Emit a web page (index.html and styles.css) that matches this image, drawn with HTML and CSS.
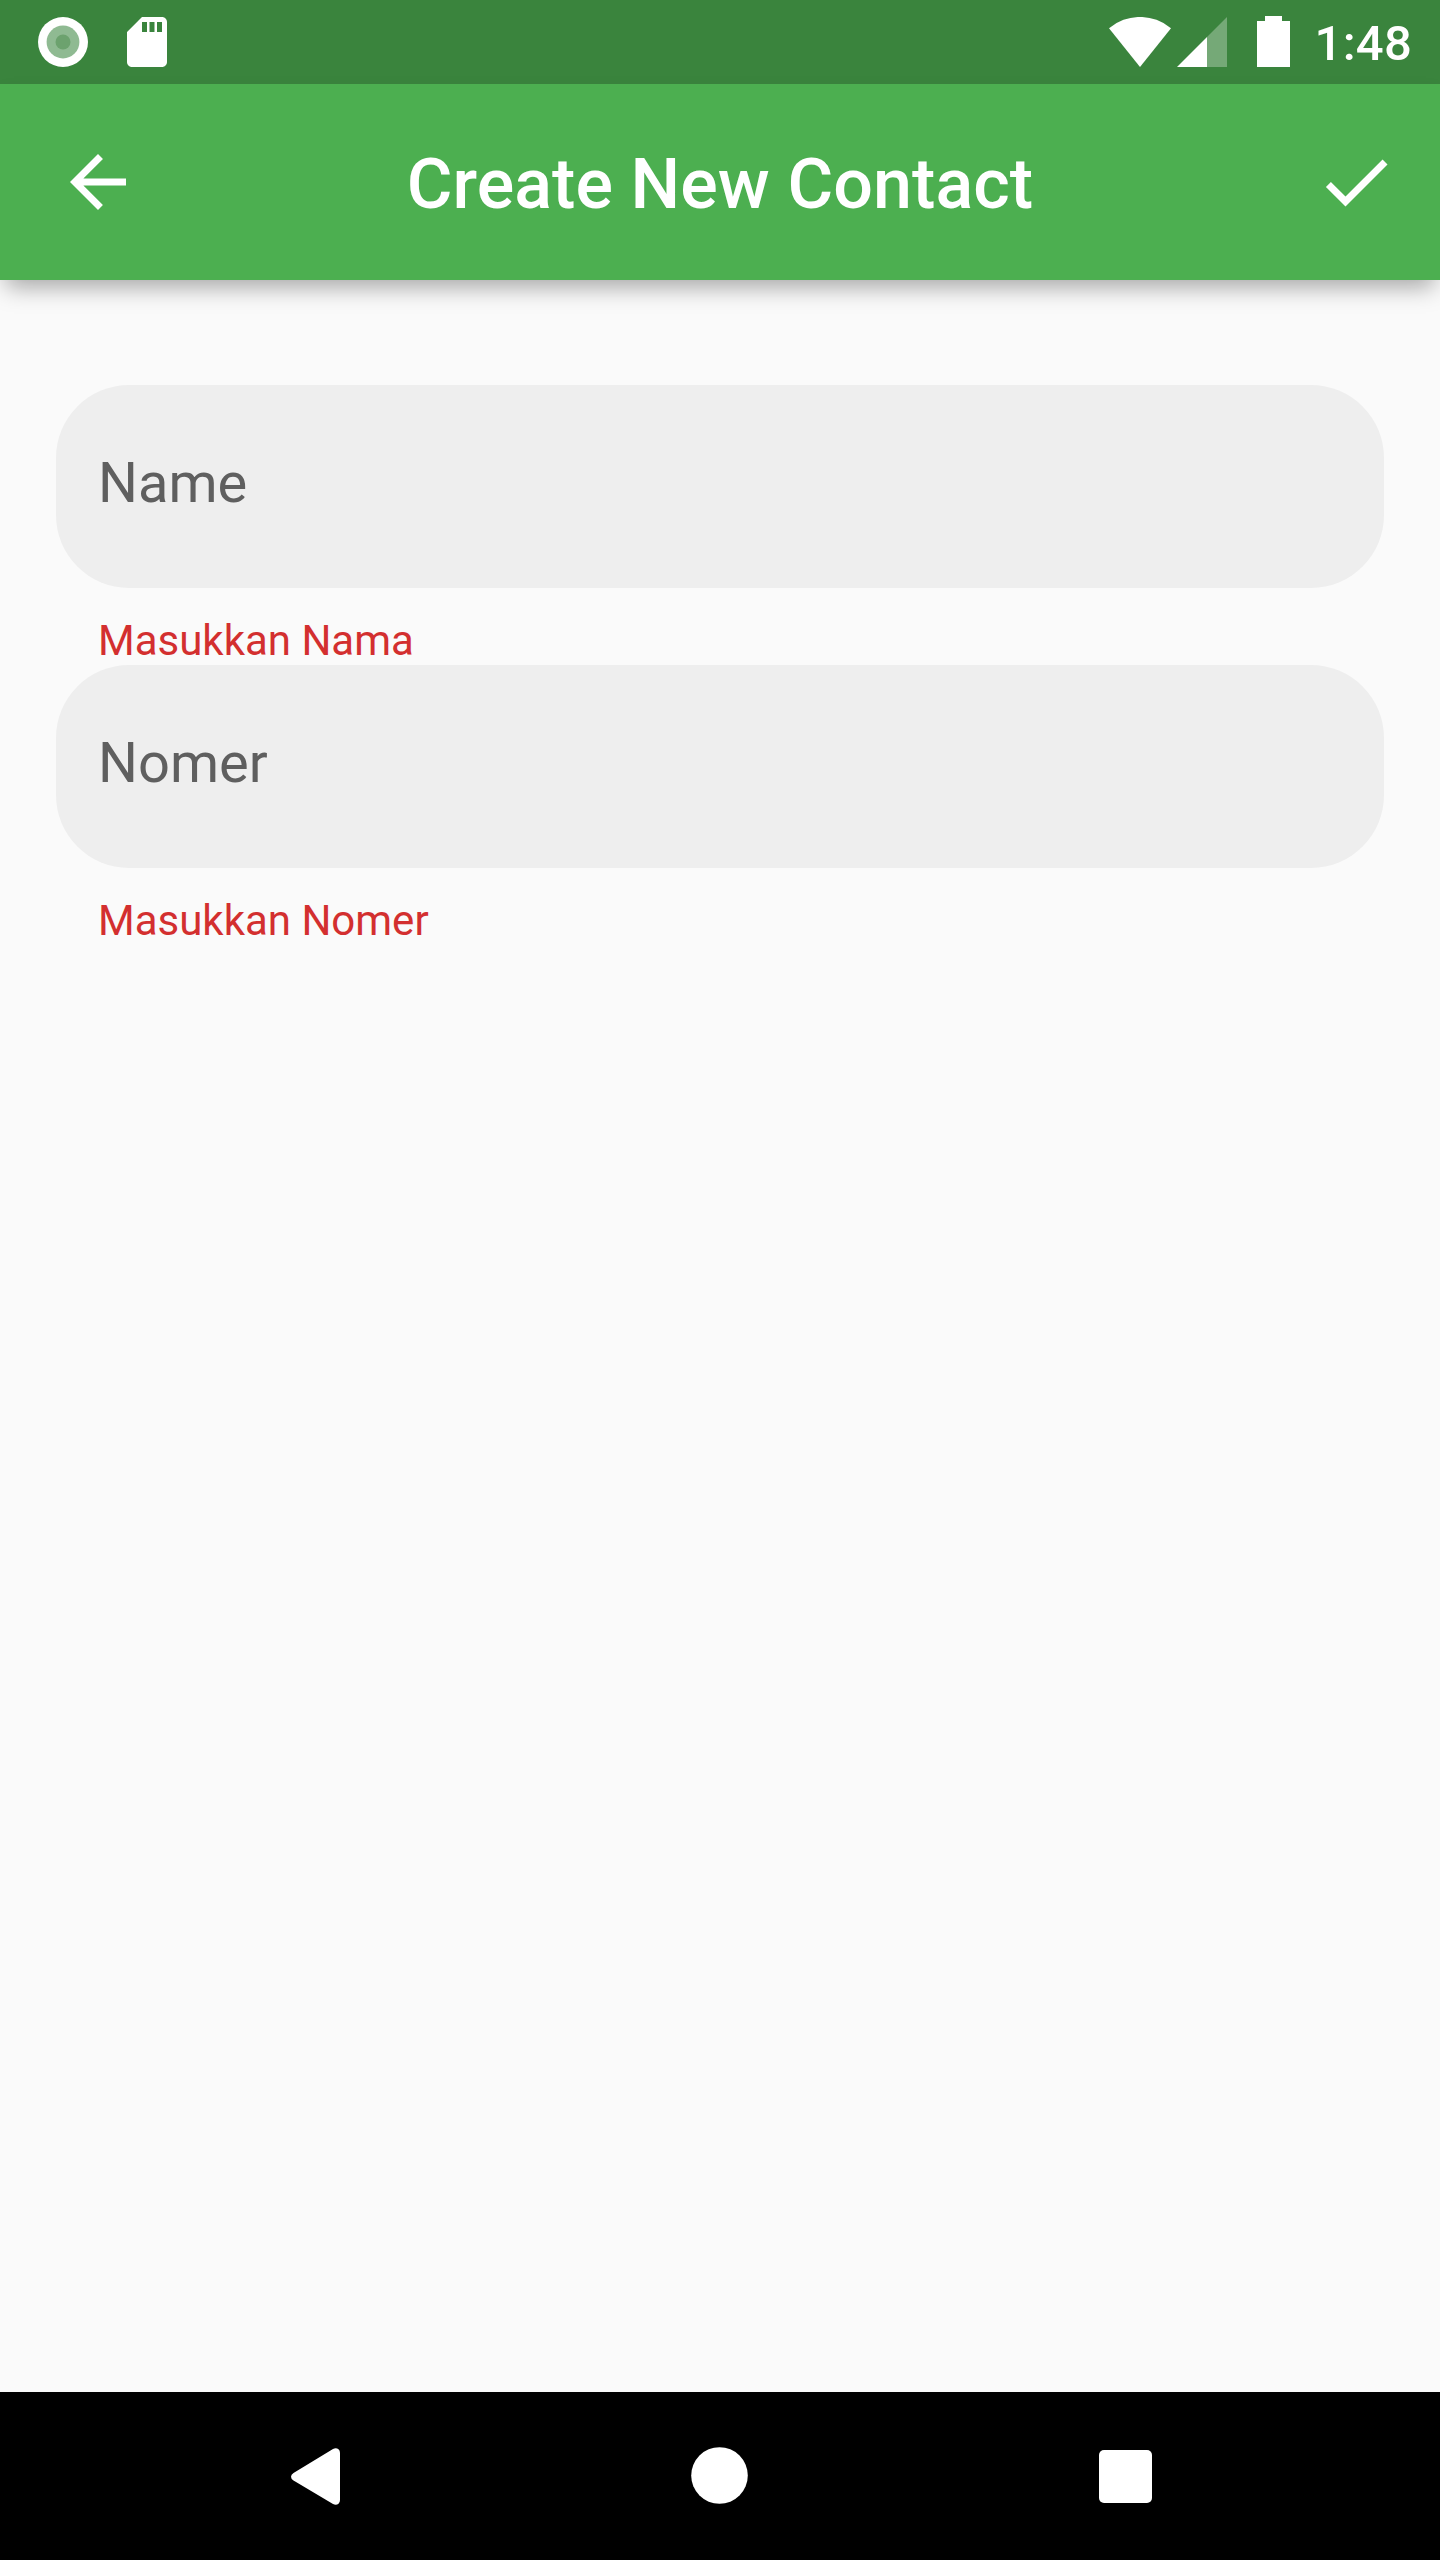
FILE: index.html
```html
<!DOCTYPE html>
<html lang="id">
<head>
<meta charset="utf-8">
<title>Create New Contact</title>
<link rel="stylesheet" href="styles.css">
</head>
<body>
<div class="screen">
  <div class="status-bar">
    <div class="status-left">
      <svg width="50" height="50" viewBox="0 0 50 50"><circle cx="25" cy="25" r="25" fill="#fff"/><circle cx="25" cy="25" r="16.4" fill="#8fba92"/><circle cx="25" cy="25" r="7.5" fill="#6ca26e"/></svg>
      <svg width="40" height="50" viewBox="4 2 16 20"><path fill="#fff" fill-rule="evenodd" d="M18 2h-8L4 8v12c0 1.100.9 2 2 2h12c1.100 0 2-.9 2-2V4c0-1.100-.9-2-2-2zM12 8h-2V4h2zM15 8h-2V4h2zM18 8h-2V4h2z"/></svg>
    </div>
    <div class="status-right">
      <svg width="62" height="50" viewBox="0 0 62 50"><path fill="#fff" d="M0 11.300A48 48 0 0 1 62 11.300L31 50z"/></svg>
      <svg class="signal" width="50" height="50" viewBox="0 0 50 50"><path fill="#fff" fill-opacity=".3" d="M30 20L50 0V50H30z"/><path fill="#fff" d="M0 50L30 20V50z"/></svg>
      <svg class="battery" width="33" height="51" viewBox="0 0 33 51"><path fill="#fff" d="M8 0H25V5H33V51H0V5H8z"/></svg>
      <span class="clock">1:48</span>
    </div>
  </div>
  <header class="app-bar">
    <svg width="84" height="84" viewBox="0 0 24 24"><path fill="#fff" d="M20 11H7.830l5.590-5.590L12 4l-8 8 8 8 1.410-1.410L7.830 13H20v-2z"/></svg>
    <h1 class="title">Create New Contact</h1>
    <svg width="84" height="84" viewBox="0 0 24 24"><path fill="#fff" d="M9 16.170L4.830 12l-1.420 1.410L9 19 21 7l-1.410-1.410z"/></svg>
  </header>
  <main class="form">
    <div class="field">Name</div>
    <div class="error">Masukkan Nama</div>
    <div class="field">Nomer</div>
    <div class="error">Masukkan Nomer</div>
  </main>
  <nav class="nav-bar">
    <svg class="nav-back" width="49" height="57" viewBox="0 0 49 57"><path fill="#fff" d="M2.500 25L42 1.100Q45 -.5 47.500 1.300Q49 2.500 49 5V52Q49 54.500 47.500 55.700Q45 57.500 42 55.900L2.500 32.500Q0 31 0 28.700Q0 26.500 2.500 25z"/></svg>
    <svg width="57" height="57" viewBox="0 0 57 57"><circle cx="28.500" cy="28.500" r="28.300" fill="#fff"/></svg>
    <svg class="nav-recent" width="53" height="53" viewBox="0 0 53 53"><rect width="53" height="53" rx="5" fill="#fff"/></svg>
  </nav>
</div>
</body>
</html>
```
FILE: styles.css
```css
* {
  box-sizing: border-box;
}

body {
  margin: 0;
  font-family: Roboto, "Liberation Sans", sans-serif;
}

svg {
  display: block;
  flex: none;
}

.screen {
  display: flex;
  flex-direction: column;
  width: 1440px;
  height: 2560px;
  background: #fafafa;
  overflow: hidden;
}

.status-bar {
  display: flex;
  justify-content: space-between;
  height: 84px;
  padding: 0 28px 0 38px;
  background: #3a843d;
}

.status-left,
.status-right {
  display: flex;
  align-items: center;
}

.status-left {
  gap: 39px;
}

.signal {
  margin-left: 6px;
}

.battery {
  margin: 0 25px 1px 30px;
}

.clock {
  padding-top: 4px;
  color: #fff;
  font-size: 49px;
  font-weight: 500;
  line-height: 58px;
  letter-spacing: 0.25px;
}

.app-bar {
  display: flex;
  align-items: center;
  justify-content: space-between;
  height: 196px;
  padding: 0 42px 0 56px;
  background: #4caf50;
  box-shadow: 0 13px 22px -6px rgba(0, 0, 0, 0.34);
}

.title {
  margin: 0 0 0 -14px;
  padding-top: 4px;
  color: #fff;
  font-size: 70px;
  font-weight: 500;
  line-height: 82px;
  letter-spacing: 0.08px;
  white-space: nowrap;
}

.form {
  flex: 1;
  padding: 105px 56px 0;
}

.field {
  display: flex;
  align-items: center;
  height: 203px;
  padding: 0 42px 7px;
  border-radius: 73px;
  background: #eee;
  color: #5f5f5f;
  font-size: 56px;
  line-height: 66px;
}

.error {
  height: 77px;
  padding: 28px 42px 0;
  color: #d32f2f;
  font-size: 42px;
  line-height: 49px;
}

.nav-bar {
  display: flex;
  justify-content: space-between;
  height: 168px;
  padding: 55px 288px 0 291px;
  background: #000;
}

.nav-back {
  margin-top: 1px;
}

.nav-recent {
  margin-top: 3px;
}
```
